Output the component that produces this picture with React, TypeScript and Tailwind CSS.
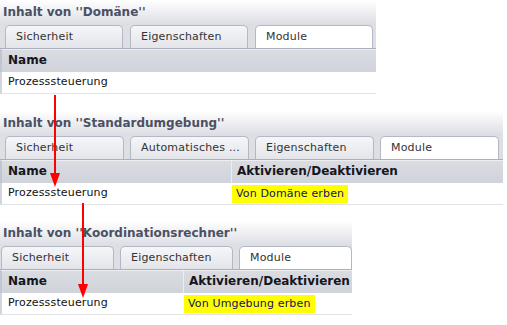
import React from "react";

type Col = { label: string; width?: number };
type PanelProps = {
  title: string;
  width: number;
  tabs: string[];
  tabW: number;
  tabGap: number;
  tabLeft: number;
  cols: Col[];
  value?: string;
};

const FONT = { fontFamily: '"DejaVu Sans", Verdana, sans-serif' };

function Panel({ title, width, tabs, tabW, tabGap, tabLeft, cols, value }: PanelProps) {
  return (
    <div className="flex flex-col" style={{ width }}>
      {/* Titelleiste */}
      <div className="h-[25px] bg-gradient-to-b from-white to-[#dcdde3] px-[3px] pt-[5px] text-[12px] font-bold leading-[15px] text-[#4a5164]">
        {title}
      </div>
      {/* Reiter */}
      <div
        className="flex h-[24px] items-end border-b border-[#a9afbd] bg-[#dedfe4]"
        style={{ paddingLeft: tabLeft, gap: tabGap }}
      >
        {tabs.map((t, i) => (
          <div
            key={t}
            className={
              i === tabs.length - 1
                ? "h-[23px] shrink-0 overflow-hidden whitespace-nowrap rounded-t-[5px] border border-b-0 border-[#b3b8c5] bg-white px-[10px] text-[11px] leading-[21px] tracking-[0.2px] text-[#333]"
                : "h-[23px] shrink-0 overflow-hidden whitespace-nowrap rounded-t-[5px] border border-b-0 border-[#b3b8c5] bg-gradient-to-b from-[#f5f6f8] to-[#e3e5ea] px-[10px] text-[11px] leading-[21px] tracking-[0.2px] text-[#333]"
            }
            style={{ width: tabW }}
          >
            {t}
          </div>
        ))}
      </div>
      {/* Kopfzeile */}
      <div className="flex h-[23px] border-t border-[#eceef2] border-l-2 border-l-[#c3c6ce] bg-gradient-to-b from-[#dadce2] to-[#d0d3da] text-[12px] font-bold leading-[21px] text-[#151520]">
        {cols.map((c, i) => (
          <div
            key={c.label}
            className={i > 0 ? "flex-1 whitespace-nowrap border-l border-[#eceef1] pl-[5px]" : "pl-[6px]"}
            style={c.width ? { width: c.width } : undefined}
          >
            {c.label}
          </div>
        ))}
      </div>
      {/* Datenzeile */}
      <div className="flex h-[22px] items-center border-b border-[#e2e3e6] border-l-2 border-l-[#d3d5dc] bg-white text-[11px] tracking-[0.15px] text-[#111]">
        <div className="pl-[6px]" style={cols[0].width ? { width: cols[0].width } : undefined}>
          Prozesssteuerung
        </div>
        {value && (
          <div className="flex h-full items-end pb-[1px] pl-[1px]">
            <span className="bg-[#ffff00] px-[4px] leading-[18px] text-[#101060]">{value}</span>
          </div>
        )}
      </div>
    </div>
  );
}

export default function App() {
  return (
    <div className="relative h-[325px] w-[507px] overflow-hidden bg-white" style={FONT}>
      <div className="flex flex-col">
        <Panel
          title={"Inhalt von ''Domäne''"}
          width={376}
          tabs={["Sicherheit", "Eigenschaften", "Module"]}
          tabW={118}
          tabGap={7}
          tabLeft={5}
          cols={[{ label: "Name" }]}
        />
        <div className="h-[17px]" />
        <Panel
          title={"Inhalt von ''Standardumgebung''"}
          width={503}
          tabs={["Sicherheit", "Automatisches ...", "Eigenschaften", "Module"]}
          tabW={119}
          tabGap={6}
          tabLeft={5}
          cols={[{ label: "Name", width: 229 }, { label: "Aktivieren/Deaktivieren" }]}
          value="Von Domäne erben"
        />
        <div className="h-[16px]" />
        <Panel
          title={"Inhalt von ''Koordinationsrechner''"}
          width={352}
          tabs={["Sicherheit", "Eigenschaften", "Module"]}
          tabW={113}
          tabGap={6}
          tabLeft={1}
          cols={[{ label: "Name", width: 181 }, { label: "Aktivieren/Deaktivieren" }]}
          value="Von Umgebung erben"
        />
      </div>
      {/* Pfeile */}
      <svg className="pointer-events-none absolute left-0 top-0" width="507" height="325">
        <line x1="55" y1="95" x2="55" y2="176" stroke="#ff0000" strokeWidth="2" />
        <polygon points="50,173 60,173 55,187" fill="#ff0000" />
        <line x1="83" y1="203" x2="83" y2="287" stroke="#ff0000" strokeWidth="2" />
        <polygon points="78,284 88,284 83,298" fill="#ff0000" />
      </svg>
    </div>
  );
}
